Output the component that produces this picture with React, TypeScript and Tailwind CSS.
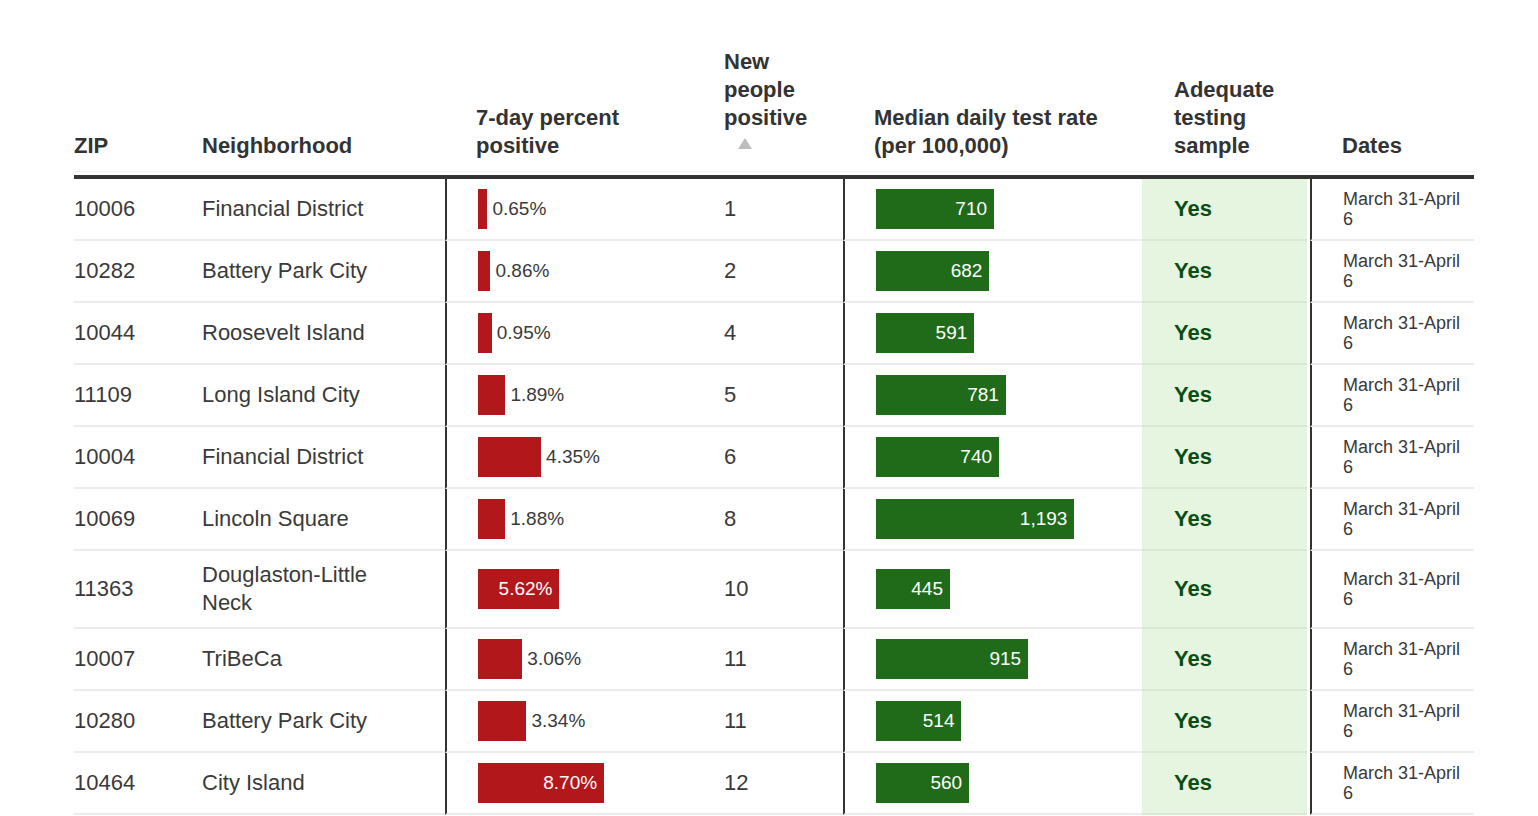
import React from "react";

type Row = {
  zip: string;
  name: string;
  pct: number;
  positive: number;
  rate: number;
};

const rows: Row[] = [
  { zip: "10006", name: "Financial District", pct: 0.65, positive: 1, rate: 710 },
  { zip: "10282", name: "Battery Park City", pct: 0.86, positive: 2, rate: 682 },
  { zip: "10044", name: "Roosevelt Island", pct: 0.95, positive: 4, rate: 591 },
  { zip: "11109", name: "Long Island City", pct: 1.89, positive: 5, rate: 781 },
  { zip: "10004", name: "Financial District", pct: 4.35, positive: 6, rate: 740 },
  { zip: "10069", name: "Lincoln Square", pct: 1.88, positive: 8, rate: 1193 },
  { zip: "11363", name: "Douglaston-Little Neck", pct: 5.62, positive: 10, rate: 445 },
  { zip: "10007", name: "TriBeCa", pct: 3.06, positive: 11, rate: 915 },
  { zip: "10280", name: "Battery Park City", pct: 3.34, positive: 11, rate: 514 },
  { zip: "10464", name: "City Island", pct: 8.7, positive: 12, rate: 560 },
];

const cols = "grid grid-cols-[128px_243px_279px_119px_299px_168px_164px]";

function HeadLines({ lines }: { lines: string[] }) {
  return (
    <div>
      {lines.map((l) => (
        <div key={l}>{l}</div>
      ))}
    </div>
  );
}

function PercentBar({ pct }: { pct: number }) {
  const width = pct * 14.5;
  const label = pct.toFixed(2) + "%";
  const inside = pct >= 5;
  return (
    <div className="flex items-center">
      <div
        className="h-[40px] bg-[#b2181b] flex items-center justify-end pr-[7px] text-white text-[19px]"
        style={{ width }}
      >
        {inside ? label : null}
      </div>
      {!inside && <span className="ml-[5px] text-[19px] text-[#3a3a3a]">{label}</span>}
    </div>
  );
}

function RateBar({ rate }: { rate: number }) {
  return (
    <div
      className="h-[40px] bg-[#1f6b19] flex items-center justify-end pr-[7px] text-white text-[19px]"
      style={{ width: rate * 0.1663 }}
    >
      {rate.toLocaleString("en-US")}
    </div>
  );
}

export default function App() {
  return (
    <div className="min-h-screen bg-white pt-[48px] pl-[74px] font-['Liberation_Sans',Arial,sans-serif]">
      <div className="w-[1400px]">
        {/* header */}
        <div className={`${cols} items-end pb-[11px] border-b border-[#efefef] text-[22px] leading-[28px] font-bold text-[#333]`}>
          <HeadLines lines={["ZIP"]} />
          <HeadLines lines={["Neighborhood"]} />
          <div className="pl-[31px]">
            <HeadLines lines={["7-day percent", "positive"]} />
          </div>
          <div>
            <HeadLines lines={["New", "people", "positive"]} />
            <div className="h-[28px] flex items-center pl-[14px] pb-[5px]">
              <svg width="14" height="11" viewBox="0 0 14 11">
                <polygon points="7,0 14,11 0,11" fill="#bdbdbd" />
              </svg>
            </div>
          </div>
          <div className="pl-[31px]">
            <HeadLines lines={["Median daily test rate", "(per 100,000)"]} />
          </div>
          <div className="pl-[32px]">
            <HeadLines lines={["Adequate", "testing", "sample"]} />
          </div>
          <div className="pl-[32px]">
            <HeadLines lines={["Dates"]} />
          </div>
        </div>
        <div className="mt-[3px] h-[4px] bg-[#333]" />

        {/* body */}
        {rows.map((r) => {
          const h = r.name.length > 20 ? "h-[78px]" : "h-[62px]";
          return (
            <div key={r.zip} className={`${cols} ${h} text-[22px] leading-[28px] text-[#3a3a3a]`}>
              <div className="flex items-center border-b-2 border-[#ececec]">{r.zip}</div>
              <div className="flex items-center pr-[32px] border-b-2 border-[#ececec]">{r.name}</div>
              <div className="flex items-center pl-[31px] border-l-2 border-l-[#333] border-b-2 border-b-[#ececec]">
                <PercentBar pct={r.pct} />
              </div>
              <div className="flex items-center border-b-2 border-[#ececec]">{r.positive}</div>
              <div className="flex items-center pl-[31px] border-l-2 border-l-[#333] border-b-2 border-b-[#ececec]">
                <RateBar rate={r.rate} />
              </div>
              <div className="flex items-center pl-[32px] mr-[3px] bg-[#e5f5e0] border-b-2 border-[#dbe8d6] text-[22px] font-bold text-[#0b4d12]">
                Yes
              </div>
              <div className="flex items-center pl-[31px] border-l-2 border-l-[#333] border-b-2 border-b-[#ececec]">
                <div className="max-w-[126px] text-[18px] leading-[20px]">March 31-April 6</div>
              </div>
            </div>
          );
        })}
      </div>
    </div>
  );
}
